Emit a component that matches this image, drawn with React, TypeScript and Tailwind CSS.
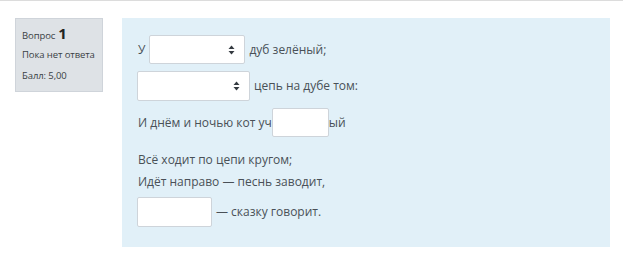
import React from "react";

const font = { fontFamily: '"Open Sans", "Segoe UI", sans-serif' };

function SelectArrows() {
  return (
    <svg width="7" height="10" viewBox="0 0 7 10" className="fill-[#343a40]">
      <path d="M3.5 0.5 L6.5 4 L0.5 4 Z" />
      <path d="M3.5 9.5 L6.5 6 L0.5 6 Z" />
    </svg>
  );
}

function FakeSelect({ w, h }: { w: string; h: string }) {
  return (
    <div className={`${w} ${h} flex items-center justify-end pr-[9px] bg-white border border-[#ced4da] rounded-[2px]`}>
      <SelectArrows />
    </div>
  );
}

function FakeInput({ w, h }: { w: string; h: string }) {
  return <div className={`${w} ${h} bg-white border border-[#ced4da] rounded-[2px]`} />;
}

export default function App() {
  return (
    <div className="w-[623px] h-[261px] bg-white border-t border-[#dcdcdc] text-[#495057]" style={font}>
      <div className="flex pt-[17px] pl-[15px]">
        {/* info */}
        <div className="w-[88px] h-[74px] bg-[#dee2e6] border border-[#cfd4da] px-[6px] pt-[7px] whitespace-nowrap text-[#3a3f44]">
          <div className="flex items-baseline gap-[3px] leading-none">
            <span className="text-[9.5px] tracking-[-0.1px]">Вопрос</span>
            <span className="text-[15px] font-bold text-[#222]">1</span>
          </div>
          <div className="text-[9.5px] tracking-[-0.1px] mt-[9px] leading-none">Пока нет ответа</div>
          <div className="text-[9.5px] tracking-[-0.1px] mt-[11px] leading-none">Балл: 5,00</div>
        </div>

        {/* formulation */}
        <div className="ml-[19px] w-[488px] h-[229px] bg-[#e1f0f8] pl-[16px] text-[12px]">
          <div className="flex items-center h-[29px] mt-[17px]">
            <span>У</span>
            <div className="ml-[4px]">
              <FakeSelect w="w-[96px]" h="h-[29px]" />
            </div>
            <span className="ml-[4px]">дуб зелёный;</span>
          </div>
          <div className="flex items-center h-[30px] mt-[7px]">
            <div className="-ml-[1px]">
              <FakeSelect w="w-[113px]" h="h-[30px]" />
            </div>
            <span className="ml-[4px]">цепь на дубе том:</span>
          </div>
          <div className="flex items-center h-[29px] mt-[7px]">
            <span>И днём и ночью кот уч</span>
            <FakeInput w="w-[57px]" h="h-[29px]" />
            <span>ый</span>
          </div>
          <div className="flex items-center h-[20px] mt-[13px]">Всё ходит по цепи кругом;</div>
          <div className="flex items-center h-[20px] mt-[2px]">Идёт направо — песнь заводит,</div>
          <div className="flex items-center h-[30px] mt-[5px]">
            <div className="-ml-[1px]">
              <FakeInput w="w-[75px]" h="h-[30px]" />
            </div>
            <span className="ml-[4px]">— сказку говорит.</span>
          </div>
        </div>
      </div>
    </div>
  );
}
